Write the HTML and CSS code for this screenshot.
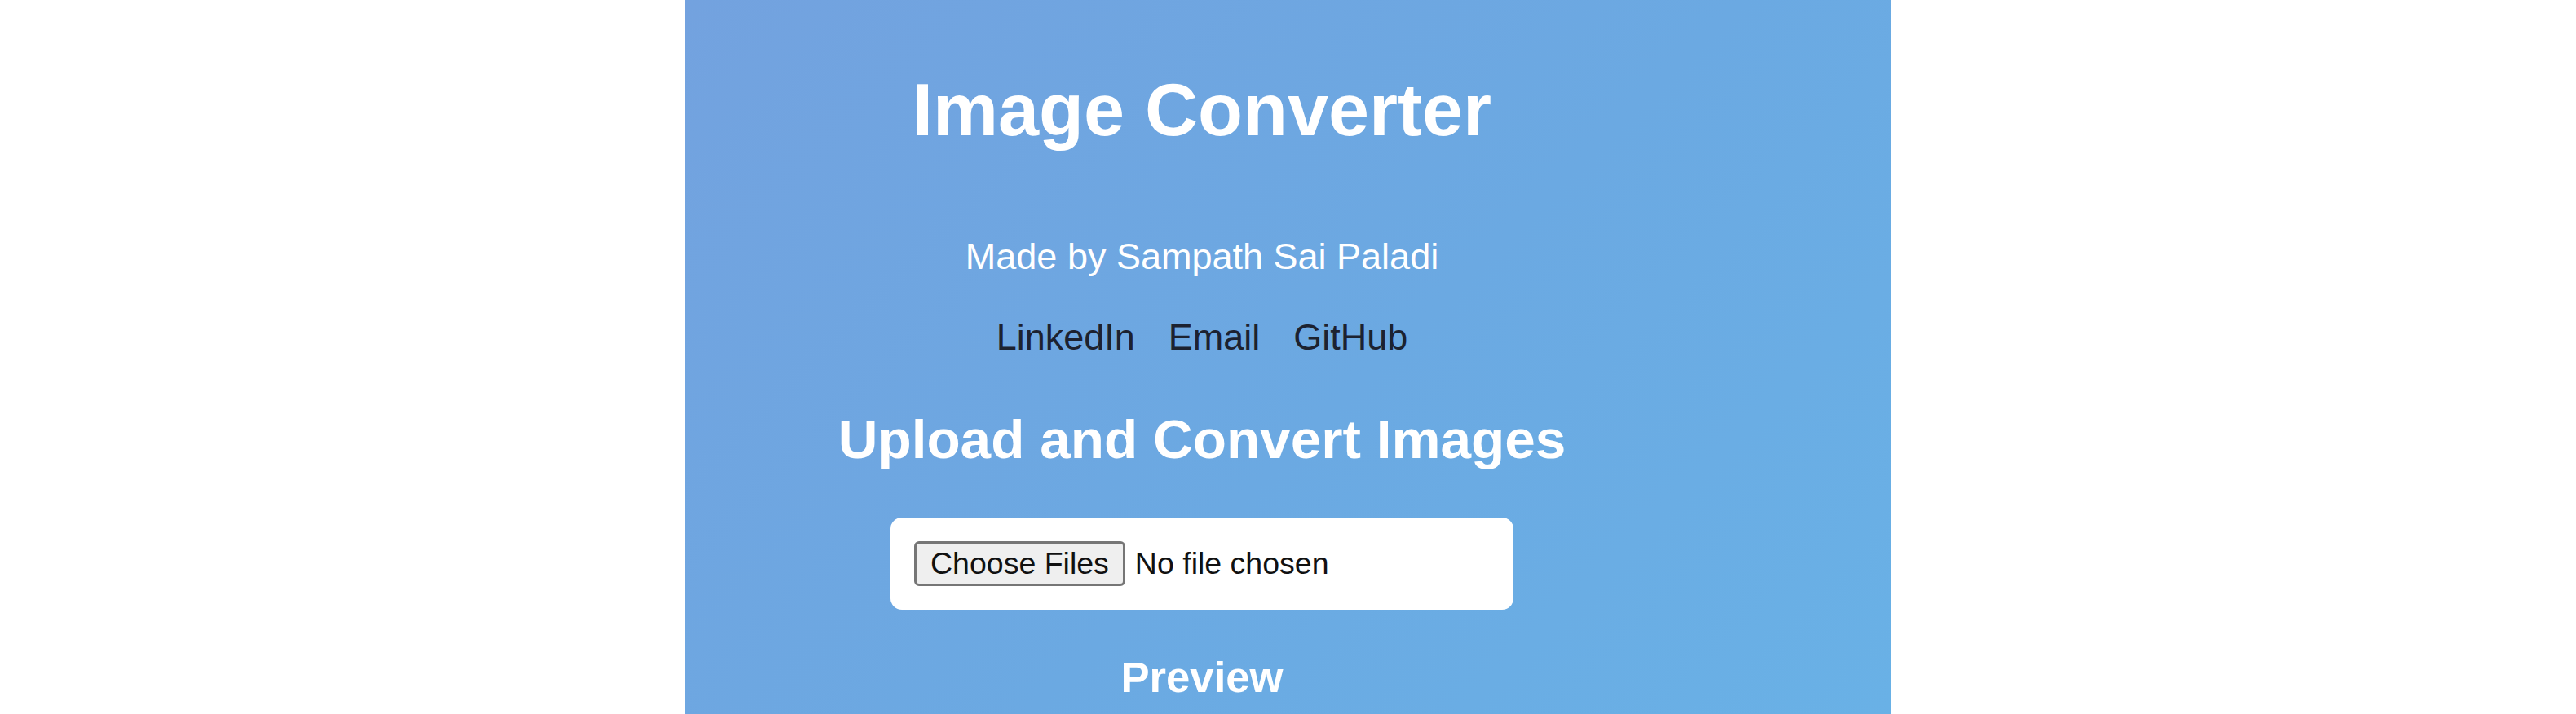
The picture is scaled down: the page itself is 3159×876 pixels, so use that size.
FILE: index.html
```html
<!DOCTYPE html>
<html lang="en">
<head>
<meta charset="utf-8">
<title>Image Converter</title>
<link rel="stylesheet" href="styles.css">
</head>
<body>
  <main class="panel">
    <div class="column">
      <h1 class="title">Image Converter</h1>
      <p class="byline">Made by Sampath Sai Paladi</p>
      <nav class="links">
        <a href="#">LinkedIn</a>
        <a href="#">Email</a>
        <a href="#">GitHub</a>
      </nav>
      <h2 class="subtitle">Upload and Convert Images</h2>
      <div class="upload-box">
        <input class="file-input" type="file" multiple>
      </div>
      <h3 class="preview-title">Preview</h3>
    </div>
  </main>
</body>
</html>
```
FILE: styles.css
```css
html, body {
  margin: 0;
  padding: 0;
  background: #ffffff;
}
body {
  font-family: "Liberation Sans", Arial, sans-serif;
  display: flex;
  justify-content: center;
  height: 876px;
  overflow: hidden;
}
.panel {
  width: 1479px;
  height: 876px;
  background: linear-gradient(135deg, #73a2df 0%, #6ba9e2 55%, #69b1e6 100%);
  padding-right: 211px;
  box-sizing: border-box;
}
.column {
  display: flex;
  flex-direction: column;
  align-items: center;
  text-align: center;
}
.title {
  margin: 83px 0 0;
  font-size: 90px;
  line-height: 104px;
  font-weight: 700;
  color: #ffffff;
}
.byline {
  margin: 102px 0 0;
  font-size: 45px;
  line-height: 52px;
  color: #ffffff;
}
.links {
  margin-top: 47px;
  display: flex;
  gap: 41px;
  font-size: 45px;
  line-height: 52px;
}
.links a {
  color: #1c2230;
  text-decoration: none;
}
.subtitle {
  margin: 60px 0 0;
  font-size: 67.5px;
  line-height: 78px;
  font-weight: 700;
  color: #ffffff;
}
.upload-box {
  margin-top: 57px;
  background: #ffffff;
  border-radius: 14px;
  padding: 29px;
  display: flex;
}
.file-input {
  width: 706px;
  height: 55px;
  margin: 0;
  padding: 0;
  font-family: "Liberation Sans", Arial, sans-serif;
  font-size: 37.5px;
  line-height: 43px;
  color: #111111;
}
.file-input::file-selector-button {
  font-family: "Liberation Sans", Arial, sans-serif;
  font-size: 37.5px;
  line-height: 43px;
  height: 55px;
  padding: 0 17px;
  margin: 0 12px 0 0;
  border: 3px solid #767676;
  border-radius: 6px;
  background: #efefef;
  color: #111111;
}
.preview-title {
  margin: 52px 0 0;
  font-size: 52.7px;
  line-height: 61px;
  font-weight: 700;
  color: #ffffff;
}
```
